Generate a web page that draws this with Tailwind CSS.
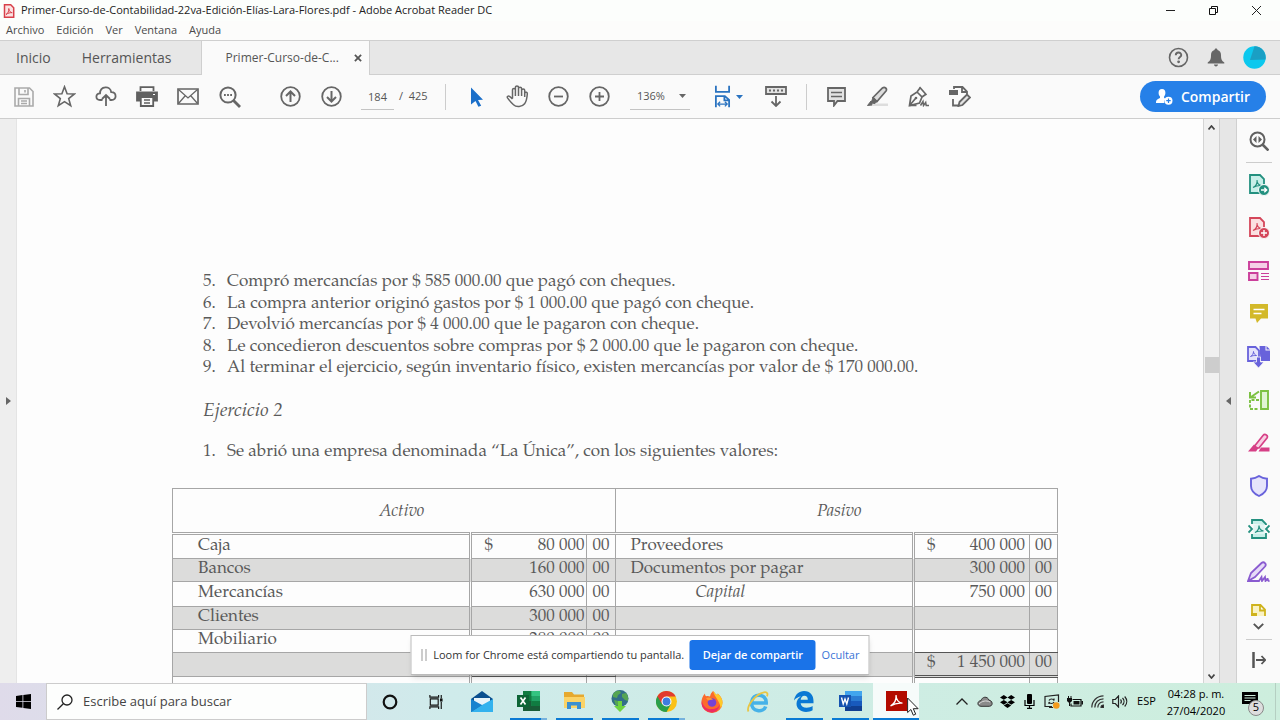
<!DOCTYPE html>
<html lang="es">
<head>
<meta charset="utf-8">
<title>Primer-Curso-de-Contabilidad-22va-Edición-Elías-Lara-Flores.pdf - Adobe Acrobat Reader DC</title>
<script src="https://cdn.jsdelivr.net/npm/@tailwindcss/browser@4"></script>
</head>
<body class="relative flex h-screen flex-col overflow-hidden bg-[#fcfcfc] font-['Open_Sans','Noto_Sans',sans-serif] text-[#444]">

<!-- Title bar -->
<header class="flex h-[21px] shrink-0 items-center bg-[#fcfefc] text-[#222]">
  <svg class="ml-[3px] h-[14px] w-3 shrink-0" viewBox="0 0 12 14" fill="none" stroke="#d8404a"><path d="M1.5.8h6.200l3 3v9.400H1.500z" stroke-width="1.500" fill="#fbe3e3"/><path d="M3 10.500c2-1 3-3.500 2.800-6 0 2.500 1.700 4 3.400 4.200-2.200-.2-4.300.4-6.200 1.800z"/></svg>
  <h1 class="ml-1.5 flex-1 text-[11px] whitespace-nowrap">Primer-Curso-de-Contabilidad-22va-Edición-Elías-Lara-Flores.pdf - Adobe Acrobat Reader DC</h1>
  <button aria-label="Minimizar" class="flex h-5 w-[43px] items-center justify-center"><svg class="size-[11px]" viewBox="0 0 11 11" stroke="#222"><path d="M1 5.500h9"/></svg></button>
  <button aria-label="Restaurar" class="flex h-5 w-[43px] items-center justify-center"><svg class="size-[11px]" viewBox="0 0 11 11" fill="none" stroke="#111"><path d="M1.500 3.500h6v6h-6zM3.500 3V1.500h6v6H8"/></svg></button>
  <button aria-label="Cerrar" class="mr-0.5 flex h-5 w-[43px] items-center justify-center"><svg class="size-[11px]" viewBox="0 0 11 11" stroke="#222"><path d="M1 1l9 9M10 1l-9 9"/></svg></button>
</header>

<!-- Menu bar -->
<nav class="flex h-[19px] shrink-0 items-center gap-3 bg-[#fcfcfb] pl-1.5 text-[11px] text-[#4a4a4a]">
  <button>Archivo</button><button>Edición</button><button>Ver</button><button>Ventana</button><button>Ayuda</button>
</nav>

<!-- Tabs -->
<div class="flex h-[35px] shrink-0 border-y border-[#cfcfcf] bg-[#e7e7e7] text-[14px] text-[#555]">
  <button class="pl-4 text-left">Inicio</button>
  <button class="pl-[31px] text-left">Herramientas</button>
  <div class="-mb-px ml-[29px] flex w-[169px] items-center justify-between border-x border-[#cfcfcf] bg-[#fafafa] pr-[7px] pl-6 text-[12px]">
    <button class="whitespace-nowrap">Primer-Curso-de-C...</button>
    <button aria-label="Cerrar pestaña"><svg class="size-2" viewBox="0 0 9 9" stroke="#555" stroke-width="2"><path d="M1 1l7 7M8 1L1 8"/></svg></button>
  </div>
  <div class="ml-auto flex items-center gap-[18px] pr-[14px]">
    <button aria-label="Ayuda"><svg class="size-[21px]" viewBox="0 0 21 21" fill="none" stroke="#666" stroke-width="1.600"><circle cx="10.500" cy="10.500" r="9"/><path d="M7.800 8.200c0-3.500 5.500-3.500 5.500-.2 0 2-2.700 2-2.700 4.200" stroke-width="1.900"/><circle cx="10.600" cy="14.800" r=".6" fill="#666"/></svg></button>
    <button aria-label="Notificaciones"><svg class="h-[19px] w-[18px]" viewBox="0 0 18 19" fill="#666"><path d="M9 .5c1 0 1.500.7 1.500 1.600 2.300.7 3.500 2.500 3.500 5 0 4.200.8 6 3.300 7.400v1H.7v-1C3.200 13.100 4 11.300 4 7.100c0-2.500 1.200-4.300 3.500-5C7.500 1.200 8 .5 9 .5zM7 16.500h4c0 1-.8 1.900-2 1.900s-2-.9-2-1.900z"/></svg></button>
    <button aria-label="Cuenta"><svg class="size-[23px]" viewBox="0 0 23 23"><circle cx="11.500" cy="11.500" r="11.200" fill="#0cc8ee"/><path d="M11.500.3a11.200 11.200 0 0 1 11 13.200L7 14z" fill="#1a9fc4"/></svg></button>
  </div>
</div>

<!-- Toolbar -->
<div class="flex h-11 shrink-0 items-center border-b border-[#cdcdcd] bg-[#fafafa] pl-[3px] text-[12px] text-[#555]">
  <button aria-label="Guardar" class="flex w-[41px] justify-center"><svg class="size-5" viewBox="0 0 20 20" fill="none" stroke="#aaa" stroke-width="1.600"><path d="M1 1h14.500L19 4.500V19H1zM5 1v6.500h9V1M4.500 19v-7.500h11V19M7 14h6M7 16.500h6M11 3v2.500"/></svg></button>
  <button aria-label="Favoritos" class="flex w-[41px] justify-center"><svg class="size-[23px]" viewBox="0 0 23 23" fill="none" stroke="#666" stroke-width="1.600"><path d="M11.500 1.800l2.600 6.900 7.400.3-5.800 4.600 2 7.100-6.200-4.100-6.200 4.100 2-7.100L1.500 9l7.400-.3z"/></svg></button>
  <button aria-label="Subir a la nube" class="flex w-[41px] justify-center"><svg class="h-[21px] w-[22px]" viewBox="0 0 22 21" fill="none" stroke="#666" stroke-width="1.800"><path d="M7.500 14H5C.2 14 .2 7.600 5 7.400 5.200-.2 15.500-.6 16.200 6.200c5.800.2 5.800 7.800.3 7.800h-2M11 20v-10.500M7 13l4-4 4 4"/></svg></button>
  <button aria-label="Imprimir" class="flex w-[41px] justify-center"><svg class="h-[21px] w-[22px]" viewBox="0 0 22 21" fill="none" stroke="#606060" stroke-width="1.800"><path d="M4.500 5V1.200h13V5"/><path d="M1 6.500h20v8H1z" fill="#606060"/><path d="M4.800 11h12.400v9H4.800z" fill="#fafafa"/><path d="M8 14h6M8 17h6" stroke-width="1.300"/><path d="M17 8.500h2" stroke="#fff" stroke-width="1.200"/></svg></button>
  <button aria-label="Correo" class="flex w-[41px] justify-center"><svg class="h-[17px] w-[22px]" viewBox="0 0 22 17" fill="none" stroke="#666" stroke-width="1.700"><path d="M1 1h20v15H1z"/><path d="M1.500 1.500L11 10l9.500-8.500M1.500 15.500L8 8M20.500 15.500L14 8" stroke-width="1.300"/></svg></button>
  <button aria-label="Buscar" class="flex w-[43px] justify-center"><svg class="size-[22px]" viewBox="0 0 22 22" fill="none" stroke="#666" stroke-width="2"><circle cx="9" cy="9" r="7.600"/><path d="M14.500 14.500l6.500 6.500" stroke-width="2.800"/><path d="M5 9h1.800M8.100 9h1.800M11.200 9H13" stroke-width="1.800"/></svg></button>
  <button aria-label="Página anterior" class="ml-[19px] flex w-[41px] justify-center"><svg class="size-[21px]" viewBox="0 0 21 21" fill="none" stroke="#666" stroke-width="1.800"><circle cx="10.500" cy="10.500" r="9.300"/><path d="M10.500 16V5.500M6 10l4.500-4.500L15 10" stroke-width="2"/></svg></button>
  <button aria-label="Página siguiente" class="flex w-[41px] justify-center"><svg class="size-[21px]" viewBox="0 0 21 21" fill="none" stroke="#666" stroke-width="1.800"><circle cx="10.500" cy="10.500" r="9.300"/><path d="M10.500 5v10.500M6 11l4.500 4.500L15 11" stroke-width="2"/></svg></button>
  <input aria-label="Número de página" value="184" class="ml-[9px] h-[26px] w-[33px] border-b border-[#c4c4c4] bg-transparent text-center text-[11px]">
  <span class="ml-[5px] w-[46px] text-[11px] whitespace-nowrap">/ &nbsp;425</span>
  <span class="h-[26px] w-px bg-[#ccc]"></span>
  <button aria-label="Seleccionar" class="ml-[10px] flex w-[41px] justify-center"><svg class="h-5 w-3" viewBox="0 0 12 20" fill="#1b6fc9"><path d="M0 .5l12 12.200-5 .3 3.200 5.800-2.800 1L4.500 14 0 17.500z"/></svg></button>
  <button aria-label="Mano" class="flex w-[41px] justify-center"><svg class="size-[23px]" viewBox="0 0 23 23" fill="none" stroke="#666" stroke-width="1.500" stroke-linejoin="round"><path d="M6.500 13.500V4.800c0-1.900 2.900-1.900 2.900 0V2.500c0-1.900 3.100-1.900 3.100 0v1c0-1.800 3.100-1.800 3.100 0v1.700c0-1.700 3.100-1.700 3.100 0V8c1-1.400 2.800-.8 2.600 1-.3 4-.6 7-2.700 9.800-2.500 3.200-8.300 3.700-11.100 1C4.800 17.500 3 15 1.500 12.900c-.8-1.500.8-2.300 2-1.500 1.100.7 2 1.600 3 2.600M9.400 4.500V11M12.500 3.500V11M15.600 4.500V11M18.700 6.500V12"/></svg></button>
  <button aria-label="Reducir" class="flex w-[41px] justify-center"><svg class="size-[21px]" viewBox="0 0 21 21" fill="none" stroke="#666" stroke-width="1.800"><circle cx="10.500" cy="10.500" r="9.300"/><path d="M6 10.500h9"/></svg></button>
  <button aria-label="Ampliar" class="flex w-[41px] justify-center"><svg class="size-[21px]" viewBox="0 0 21 21" fill="none" stroke="#666" stroke-width="1.800"><circle cx="10.500" cy="10.500" r="9.300"/><path d="M6 10.500h9M10.500 6v9"/></svg></button>
  <div class="relative ml-[10px] flex h-[26px] w-[60px] items-center border-b border-[#c4c4c4]">
    <select aria-label="Zoom" class="w-full appearance-none bg-transparent pl-[7px] text-[11px]"><option>136%</option></select>
    <svg class="pointer-events-none absolute right-1 h-1 w-[7px]" viewBox="0 0 7 4" fill="#666"><path d="M0 0h7L3.500 4z"/></svg>
  </div>
  <button aria-label="Ajustar ancho" class="ml-6 flex items-center gap-[5px]"><svg class="h-[23px] w-[17px]" viewBox="0 0 18 23" fill="none" stroke="#2a73c0" stroke-width="1.900"><path d="M2 0v6.500h14V0M2 23V11h9.500l4.500 4v8M11 11v4.500h5"/><path d="M4 19.500h10M6.500 17L4 19.500 6.500 22M11.500 17l2.500 2.500-2.500 2.500" stroke-width="1.300"/></svg><svg class="h-1 w-[7px]" viewBox="0 0 7 4" fill="#2a73c0"><path d="M0 0h7L3.500 4z"/></svg></button>
  <button aria-label="Desplazamiento" class="ml-3 flex w-[41px] justify-center"><svg class="h-[21px] w-[22px]" viewBox="0 0 22 21" fill="none" stroke="#666" stroke-width="1.800"><path d="M1 1h20v7H1z" fill="#e3e3e3"/><path d="M4 4.500h14" stroke-dasharray="2 2"/><path d="M11 10v10M6.500 15.500L11 20l4.500-4.500"/></svg></button>
  <span class="ml-[10px] h-[26px] w-px bg-[#ccc]"></span>
  <button aria-label="Comentario" class="ml-[9px] flex w-[41px] justify-center"><svg class="h-5 w-[19px]" viewBox="0 0 19 20" fill="#e3e3e3" stroke="#666" stroke-width="1.800"><path d="M1 1h17v13h-7.500L7 18.500V14H1z"/><path d="M4 5.500h11M4 9.500h11" stroke-width="1.300"/></svg></button>
  <button aria-label="Resaltar" class="flex w-[41px] justify-center"><svg class="size-[21px]" viewBox="0 0 21 21" fill="#ddd" stroke="#666" stroke-width="1.700"><path d="M8 17.500h13V20H3z" fill="#ddd" stroke="none"/><path d="M6 11.500L15.500 2c2.200-1.800 5 .8 3.500 3l-9 10.500z"/><path d="M6 11.500l4 4-2 2-4-.5zM4 15l-3.500 4.500L5 19z" fill="#666" stroke-width="1"/></svg></button>
  <button aria-label="Firmar" class="flex w-[41px] justify-center"><svg class="size-[21px]" viewBox="0 0 21 21" fill="none" stroke="#666" stroke-width="1.700"><path d="M1.500 19.500L3 10l6-4 5 5-2.500 6zM9 6l3-4M14 11l3.500-2.500M11.500 1l7 8M1.500 19.500l6-7"/><circle cx="8" cy="12" r="1.300" fill="#666" stroke="none"/><path d="M1.500 19.500h7M12.500 19.500l2.500-4 .5 4 2.200-3 .5 3H21" stroke-width="1.500"/></svg></button>
  <button aria-label="Editar" class="flex w-[41px] justify-center"><svg class="h-[21px] w-[22px]" viewBox="0 0 22 21" fill="none" stroke="#666" stroke-width="1.800"><path d="M5 3V1h8.500L18 5.500V8M13 1v5h5M4 13v6.500h5"/><path d="M0 4h9v5H0z" fill="#666" stroke="none"/><path d="M10.500 16l7.500-7.500 3 3-7.500 7.500-4 1z" fill="#e3e3e3"/></svg></button>
  <button class="mr-[14px] ml-auto flex h-[31px] w-[126px] items-center justify-center gap-2 rounded-full bg-[#2680e8] text-[14px] font-semibold text-white">
    <svg class="h-4 w-[17px]" viewBox="0 0 17 16" fill="#fff"><path d="M6 0c2.300 0 3.400 1.600 3.400 3.800 0 1.700-.6 2.900-1.300 3.700v1.400l1.700.8A4.500 4.500 0 0 0 8.300 14H0c0-3 .8-3.600 4-5V7.500C3.200 6.700 2.600 5.500 2.600 3.800 2.600 1.600 3.700 0 6 0z"/><circle cx="12.500" cy="11.700" r="4"/><path d="M12.500 9.500v4.400M10.300 11.700h4.400" stroke="#2680e8" stroke-width="1.200"/></svg>
    Compartir
  </button>
</div>

<!-- Workspace -->
<main class="flex min-h-0 flex-1">
  <button aria-label="Abrir panel de navegación" class="flex w-[17px] shrink-0 items-center justify-center border-r border-[#e4e4e4] bg-[#eeeeee]"><svg class="h-2 w-[5px]" viewBox="0 0 5 8" fill="#666"><path d="M0 0l5 4-5 4z"/></svg></button>

  <!-- Page -->
  <article class="min-w-0 flex-1 overflow-hidden bg-[#fdfdfd] pt-[153px] pr-[145px] pl-[155px] font-['TeX_Gyre_Pagella','Palatino_Linotype','Liberation_Serif',serif] text-[17px] text-[#5a5a5a]">
    <ol start="5" class="ml-[31px] leading-[22px] whitespace-nowrap">
      <li class="flex h-[22px]"><span class="w-6">5.</span>Compró mercancías por $ 585 000.00 que pagó con cheques.</li>
      <li class="flex h-[21px]"><span class="w-6">6.</span>La compra anterior originó gastos por $ 1 000.00 que pagó con cheque.</li>
      <li class="flex h-[22px]"><span class="w-6">7.</span>Devolvió mercancías por $ 4 000.00 que le pagaron con cheque.</li>
      <li class="flex h-[21px]"><span class="w-6">8.</span>Le concedieron descuentos sobre compras por $ 2 000.00 que le pagaron con cheque.</li>
      <li class="flex h-[22px]"><span class="w-6">9.</span>Al terminar el ejercicio, según inventario físico, existen mercancías por valor de $ 170 000.00.</li>
    </ol>
    <h2 class="mt-5 ml-[31px] text-[19px] leading-[24px] italic">Ejercicio 2</h2>
    <p class="mt-[18px] ml-[31px] flex leading-[22px] whitespace-nowrap"><span class="w-6">1.</span>Se abrió una empresa denominada “La Única”, con los siguientes valores:</p>

    <table class="mt-6 w-full table-fixed border-collapse border border-[#a6a6a6] leading-[22px]">
      <colgroup><col><col class="w-8"><col class="w-[84px]"><col class="w-7"><col><col class="w-8"><col class="w-[84px]"><col class="w-7"></colgroup>
      <thead>
        <tr class="h-[45px] border-b-3 border-double border-[#a6a6a6]">
          <th colspan="4" class="border-r border-[#a6a6a6] pt-1 pl-4 font-normal italic">Activo</th>
          <th colspan="4" class="pt-1 pl-1.5 font-normal italic">Pasivo</th>
        </tr>
      </thead>
      <tbody>
        <tr class="h-[25px] border-b border-[#a6a6a6]">
          <td class="border-r-3 border-double border-[#a6a6a6] pl-[25px]">Caja</td><td class="pl-3">$</td><td class="border-r border-[#a6a6a6] pr-0.5 text-right">80 000</td><td class="border-r border-[#a6a6a6] text-center">00</td>
          <td class="border-r-3 border-double border-[#a6a6a6] pl-[15px]">Proveedores</td><td class="pl-3">$</td><td class="border-r border-[#a6a6a6] pr-1 text-right">400 000</td><td class="text-center">00</td>
        </tr>
        <tr class="h-[23px] border-b border-[#a6a6a6] bg-[#dcdcdb]">
          <td class="border-r-3 border-double border-[#a6a6a6] pl-[25px]">Bancos</td><td></td><td class="border-r border-[#a6a6a6] pr-0.5 text-right">160 000</td><td class="border-r border-[#a6a6a6] text-center">00</td>
          <td class="border-r-3 border-double border-[#a6a6a6] pl-[15px]">Documentos por pagar</td><td></td><td class="border-r border-[#a6a6a6] pr-1 text-right">300 000</td><td class="text-center">00</td>
        </tr>
        <tr class="h-[25px] border-b border-[#a6a6a6]">
          <td class="border-r-3 border-double border-[#a6a6a6] pl-[25px]">Mercancías</td><td></td><td class="border-r border-[#a6a6a6] pr-0.5 text-right">630 000</td><td class="border-r border-[#a6a6a6] text-center">00</td>
          <td class="border-r-3 border-double border-[#a6a6a6] pl-20 italic">Capital</td><td></td><td class="border-r border-[#a6a6a6] pr-1 text-right">750 000</td><td class="text-center">00</td>
        </tr>
        <tr class="h-[23px] border-b border-[#a6a6a6] bg-[#dcdcdb]">
          <td class="border-r-3 border-double border-[#a6a6a6] pl-[25px]">Clientes</td><td></td><td class="border-r border-[#a6a6a6] pr-0.5 text-right">300 000</td><td class="border-r border-[#a6a6a6] text-center">00</td>
          <td class="border-r-3 border-double border-[#a6a6a6]"></td><td></td><td class="border-r border-[#a6a6a6]"></td><td></td>
        </tr>
        <tr class="h-[23px] border-b border-[#a6a6a6]">
          <td class="border-r-3 border-double border-[#a6a6a6] pl-[25px]">Mobiliario</td><td></td><td class="border-r border-[#a6a6a6] pr-0.5 text-right">280 000</td><td class="border-r border-[#a6a6a6] text-center">00</td>
          <td class="border-r-3 border-double border-[#a6a6a6]"></td><td class="border-b border-[#555]"></td><td class="border-r border-b border-r-[#a6a6a6] border-b-[#555]"></td><td class="border-b border-[#555]"></td>
        </tr>
        <tr class="h-[23px] border-b border-[#a6a6a6] bg-[#dcdcdb]">
          <td class="border-r-3 border-double border-[#a6a6a6]"></td><td class="border-b border-[#555]"></td><td class="border-r border-b border-r-[#a6a6a6] border-b-[#555]"></td><td class="border-r border-b border-r-[#a6a6a6] border-b-[#555]"></td>
          <td class="border-r-3 border-double border-[#a6a6a6]"></td><td class="border-b-3 border-[#555] pl-3 [border-bottom-style:double]">$</td><td class="border-r border-b-3 border-r-[#a6a6a6] border-b-[#555] pr-1 text-right whitespace-nowrap [border-bottom-style:double]">1 450 000</td><td class="border-b-3 border-[#555] text-center [border-bottom-style:double]">00</td>
        </tr>
        <tr class="h-6">
          <td class="border-r-3 border-double border-[#a6a6a6]"></td><td></td><td class="border-r border-[#a6a6a6]"></td><td class="border-r border-[#a6a6a6]"></td>
          <td class="border-r-3 border-double border-[#a6a6a6]"></td><td></td><td class="border-r border-[#a6a6a6]"></td><td></td>
        </tr>
      </tbody>
    </table>
  </article>

  <!-- Scroll bar -->
  <div class="flex w-4 shrink-0 flex-col items-center border-l border-[#d4d4d4] bg-[#f0f0f0] pt-1.5 pb-1">
    <button aria-label="Subir"><svg class="block h-[5px] w-[7px]" viewBox="0 0 7 5" fill="none" stroke="#444" stroke-width="1.700"><path d="M.5 4.500l3-3.500 3 3.500"/></svg></button>
    <div class="min-h-0 flex-[226]"></div>
    <div class="h-4 w-3.5 bg-[#cdcdcd]"></div>
    <div class="min-h-0 flex-[300]"></div>
    <button aria-label="Bajar"><svg class="block h-[5px] w-[7px]" viewBox="0 0 7 5" fill="none" stroke="#444" stroke-width="1.700"><path d="M.5.5L3.500 4l3-3.500"/></svg></button>
  </div>
  <button aria-label="Cerrar panel de herramientas" class="flex w-[18px] shrink-0 items-center justify-center border-x border-[#d0d0d0] bg-[#e6e6e6]"><svg class="h-2 w-[5px]" viewBox="0 0 5 8" fill="#666"><path d="M5 0L0 4l5 4z"/></svg></button>

  <!-- Tools pane -->
  <aside class="flex w-[43px] shrink-0 flex-col items-center overflow-hidden bg-[#fafafa]">
    <button aria-label="Buscar herramientas" class="flex h-[43px] shrink-0 items-center"><svg class="size-5" viewBox="0 0 20 20" fill="none" stroke="#606060" stroke-width="2"><circle cx="8.500" cy="8.500" r="7"/><path d="M13.500 13.500l6 6" stroke-width="2.600"/><path d="M7.500 5v7L4 8.500zM9.500 5v7L13 8.500z" fill="#606060" stroke="none"/></svg></button>
    <span class="h-px w-[26px] shrink-0 bg-[#ccc]"></span>
    <button aria-label="Exportar PDF" class="flex h-[43px] shrink-0 items-center"><svg class="size-[22px]" viewBox="0 0 22 22" fill="none" stroke="#23907f" stroke-width="1.800"><path d="M2 1h10l4 4v14H2z" fill="#c8efe9"/><path d="M5 13.500c3-1.500 4.500-4 4-7.500 0 3 2 5 4 5.500-3 0-5.500.5-8 2z" stroke-width="1.100"/><circle cx="16" cy="16" r="5.500" fill="#23907f" stroke="#fafafa" stroke-width="1"/><path d="M13 16h5.500M16.300 13.700l2.400 2.300-2.400 2.300" stroke="#fff" stroke-width="1.400"/></svg></button>
    <button aria-label="Crear PDF" class="flex h-[43px] shrink-0 items-center"><svg class="size-[22px]" viewBox="0 0 22 22" fill="none" stroke="#d4465a" stroke-width="1.800"><path d="M2 1h10l4 4v14H2z" fill="#fbdfe0"/><path d="M5 13.500c3-1.500 4.500-4 4-7.500 0 3 2 5 4 5.500-3 0-5.500.5-8 2z" stroke-width="1.100"/><circle cx="16" cy="16" r="5.500" fill="#d4465a" stroke="#fafafa" stroke-width="1"/><path d="M13 16h6M16 13v6" stroke="#fff" stroke-width="1.400"/></svg></button>
    <button aria-label="Organizar páginas" class="flex h-[43px] shrink-0 items-center"><svg class="h-5 w-[21px]" viewBox="0 0 21 20" fill="#f5cfe6" stroke="#cb3f9b" stroke-width="1.900"><path d="M1 1h19v7H1zM1 12h8.500v7H1z"/><path d="M13 12.500h8M13 15.500h8M13 18.500h8" stroke-width="1.200"/></svg></button>
    <button aria-label="Comentar" class="flex h-[43px] shrink-0 items-center"><svg class="h-[19px] w-5" viewBox="0 0 20 19" fill="#d3b92a"><path d="M1 0h18v14.500h-7L8 19l-1.500-4.500H1z"/><path d="M4.500 5.500h11M4.500 9.500h8" stroke="#fff" stroke-width="1.500"/></svg></button>
    <button aria-label="Combinar archivos" class="flex h-[43px] shrink-0 items-center"><svg class="h-[23px] w-[23px]" viewBox="0 0 23 23" fill="none" stroke="#6862db" stroke-width="1.800"><path d="M1 2h7.500l3.500 3.500V16H1z" fill="#e4e2fb"/><path d="M3.500 11.500c2-1 3-3 3-5 0 2 1.500 3.500 3 4-2.500 0-4 0-6 1z" stroke-width="1"/><path d="M12.500 1h6v4.500H23V16h-9.500zM19.500 1L23 4.500h-3.500z" fill="#6862db" stroke="none"/><path d="M9.500 12h4v5h3.500l-5.500 6-5.500-6h3.500z" fill="#6862db" stroke="#fafafa" stroke-width=".8"/></svg></button>
    <button aria-label="Recortar páginas" class="flex h-[43px] shrink-0 items-center"><svg class="h-5 w-[21px]" viewBox="0 0 21 20" fill="none" stroke="#7cc142" stroke-width="1.900"><path d="M13 1h7v18h-7z" fill="#e0f4d2"/><path d="M11 10H2v9h9" stroke-dasharray="3 1.500"/><path d="M11 1.500L3 7M2 2v5.500h6" stroke-width="2"/></svg></button>
    <button aria-label="Censurar" class="flex h-[43px] shrink-0 items-center"><svg class="h-[19px] w-[22px]" viewBox="0 0 22 19" fill="#f7cfe2" stroke="#d63f86" stroke-width="1.700"><path d="M5 15L15 2.500C17 .2 20.500 2.500 19 5L11 15z"/><path d="M0 18.500l6-7 4.500 3.500L8 18.500zM10.500 18.500l2.500-4h8.500v4z" fill="#d63f86" stroke="none"/></svg></button>
    <button aria-label="Proteger" class="flex h-[43px] shrink-0 items-center"><svg class="h-[22px] w-[18px]" viewBox="0 0 18 22" fill="#e6e4fb" stroke="#6862db" stroke-width="1.900"><path d="M9 1c2.500 1.700 5 2.500 8 2.700V11c0 5-3.500 8-8 10-4.500-2-8-5-8-10V3.700C4 3.500 6.500 2.700 9 1z"/></svg></button>
    <button aria-label="Optimizar PDF" class="flex h-[43px] shrink-0 items-center"><svg class="h-5 w-[22px]" viewBox="0 0 22 20" fill="none" stroke="#23907f" stroke-width="1.800"><path d="M4 5V1h10l4 4v1M4 15v4h14v-5" fill="#c8efe9"/><path d="M5.500 6h11v9h-11z" fill="#dff5f2" stroke="none"/><path d="M7 13.500c2.500-1 4-3.500 4-7 0 3 2 5 4.500 5.500-3 0-6 0-8.500 1.500z" stroke-width="1.200"/><path d="M.5 6.500L4 10l-3.500 3.500M21.500 6.500L18 10l3.500 3.500"/></svg></button>
    <button aria-label="Rellenar y firmar" class="flex h-[43px] shrink-0 items-center"><svg class="h-[21px] w-[23px]" viewBox="0 0 23 21" fill="none" stroke="#8a5bd0" stroke-width="1.800"><path d="M1 20l3-8L14.500 2c2.500-2 5.500 1 3.500 3.500L8 16z" fill="#e7dbf8"/><path d="M1 20h11l2.500-4 .5 4 3-4 .5 4c1.500-1 2-2 2-3 0 2 .5 3 2 3"/></svg></button>
    <div class="flex min-h-0 flex-1 flex-col items-center overflow-hidden pt-[11px]">
      <button aria-label="Más herramientas" class="h-3 shrink-0 overflow-hidden"><svg class="h-[18px] w-4" viewBox="0 0 16 18" fill="#faf3c4" stroke="#cfb31d" stroke-width="1.800"><path d="M1 17V1h8.500L14 5.500V17M9 1v5.500h5"/><path d="M0 9h6v9H0z" fill="#cfb31d" stroke="none"/></svg></button>
      <button aria-label="Desplazar herramientas" class="mt-1.5 h-[9px] shrink-0"><svg class="block h-[7px] w-[11px]" viewBox="0 0 11 7" fill="none" stroke="#555" stroke-width="1.900"><path d="M.8.800l4.700 4.700L10.200.8"/></svg></button>
      <span class="mt-2 h-px w-[26px] shrink-0 bg-[#ccc]"></span>
      <button aria-label="Contraer panel" class="flex h-10 shrink-0 items-center"><svg class="h-4 w-[14px]" viewBox="0 0 14 16" fill="none" stroke="#555"><path d="M1.500 0v16" stroke-width="2.500"/><path d="M4 8h9M9.500 4L13.200 8l-3.700 4" stroke-width="1.800"/></svg></button>
    </div>
  </aside>
</main>

<!-- Taskbar -->
<footer class="flex h-[37px] shrink-0 items-stretch bg-linear-to-r from-[#dfdbea] via-[#cfebeb] via-35% to-[#cdeedd] text-black">
  <button aria-label="Inicio" class="flex w-[46px] shrink-0 items-center justify-center"><svg class="size-[15px]" viewBox="0 0 15 15"><path d="M0 2l6.500-1v6H0zM7.300.9L15 0v7H7.300zM0 7.800h6.500v6L0 13zM7.300 7.800H15V15l-7.700-1z"/></svg></button>
  <label class="flex w-[321px] shrink-0 items-center border border-[#ccc] bg-[#fdfefd]">
    <svg class="ml-[10px] size-4" viewBox="0 0 16 16" fill="none" stroke="#222" stroke-width="1.300"><circle cx="10" cy="6" r="5"/><path d="M6.300 9.700L.5 15.500"/></svg>
    <input aria-label="Buscar" placeholder="Escribe aquí para buscar" class="ml-[10px] w-64 bg-transparent text-[13px] placeholder:text-[#444]">
  </label>
  <button aria-label="Cortana" class="flex w-[46px] shrink-0 items-center justify-center"><svg class="size-4" viewBox="0 0 16 16" fill="none" stroke="#111" stroke-width="2.200"><circle cx="8" cy="8" r="6.300"/></svg></button>
  <button aria-label="Vista de tareas" class="flex w-[46px] shrink-0 items-center justify-center"><svg class="h-[14px] w-4" viewBox="0 0 16 16" fill="none" stroke="#111" stroke-width="1.300"><path d="M1 0v2.500h10V0M1 16v-2.500h10V16M1.500 4.500h9v7h-9zM14 0v4M14 8v8"/><path d="M12.500 4h3v3.500h-3z" fill="#111" stroke="none"/></svg></button>
  <button aria-label="Correo" class="flex w-[46px] shrink-0 items-center justify-center"><svg class="h-[22px] w-6" viewBox="0 0 24 22"><path d="M1 8L12 0l11 8v13H1z" fill="#0b4f8f"/><path d="M4 7h16v7H4z" fill="#e8f4fa"/><path d="M1 8l11 6L1 21z" fill="#1683cf"/><path d="M23 8l-11 6-11 7h22z" fill="#33b2ee"/></svg></button>
  <button aria-label="Excel" class="flex w-[46px] shrink-0 flex-col items-center justify-between pt-2"><svg class="h-5 w-[23px]" viewBox="0 0 23 20"><path d="M6 0h17v20H6z" fill="#21a366"/><path d="M6 0h8.500v10H6z" fill="#107c41"/><path d="M14.500 0H23v5h-8.500z" fill="#33c481"/><path d="M6 10h8.500v10H6zM14.500 15H23v5h-8.500z" fill="#185c37"/><path d="M14.500 10H23v5h-8.500z" fill="#107c41"/><path d="M0 4h12v12H0z" fill="#0d6436"/><path d="M3.500 6.500l5 7M8.500 6.500l-5 7" stroke="#fff" stroke-width="1.700"/></svg><span class="h-0.5 w-[37px] border-r-6 border-[#76b2dd] bg-[#0a7ad4]"></span></button>
  <button aria-label="Explorador de archivos" class="flex w-[46px] shrink-0 flex-col items-center justify-between pt-2"><svg class="h-5 w-[21px]" viewBox="0 0 21 20"><path d="M0 1h8l2 2.500h10V17H0z" fill="#e6a92f"/><path d="M0 6h21v11H0z" fill="#fbd367"/><path d="M3 18v-7h14v7h-4v-3.500H7V18z" fill="#3b8fd1"/></svg><span class="h-0.5 w-[37px] bg-[#0a7ad4]"></span></button>
  <button aria-label="Mapas" class="flex w-[46px] shrink-0 flex-col items-center justify-between pt-[7px]"><svg class="h-[22px] w-[18px]" viewBox="0 0 18 22"><circle cx="9" cy="8.500" r="8.500" fill="#326e89"/><path d="M2 4c2-3 5-4 7-3l1 2-3 2-1 3-4-1zM11 4l4-1c2 2 2.500 5 2 8l-3-1-3-3zM3 10l4 1 1 4-3 1z" fill="#55a553"/><path d="M7 11h4v5h4l-6 6-6-6h4z" fill="#6ed33e"/></svg><span class="h-0.5 w-[37px] bg-[#0a7ad4]"></span></button>
  <button aria-label="Chrome" class="flex w-[46px] shrink-0 flex-col items-center justify-between pt-2"><svg class="size-[21px]" viewBox="0 0 21 21"><circle cx="10.500" cy="10.500" r="10.500" fill="#fbc116"/><path d="M1.400 5.250A10.500 10.500 0 0 0 10.500 21L15 13z" fill="#2a9f4b"/><path d="M10.500 5.500h9.200l-.1-.2A10.500 10.500 0 0 0 1.400 5.200l4.700 8z" fill="#e23b2e"/><circle cx="10.500" cy="10.500" r="5" fill="#fff"/><circle cx="10.500" cy="10.500" r="3.900" fill="#3f7de0"/></svg><span class="h-0.5 w-[37px] border-r-6 border-[#76b2dd] bg-[#0a7ad4]"></span></button>
  <button aria-label="Firefox" class="flex w-[46px] shrink-0 items-center justify-center"><svg class="size-[22px]" viewBox="0 0 22 22"><path d="M12 0c2 2 2.500 3 4 4 1-.2.500-1 .7-1.500 3 2.500 4.800 5.500 4.800 9a10.500 10.500 0 0 1-21 0C.5 8 1.500 5 4 2.500c0 1.500.3 2 1.200 2.700 1.300-.5 2.500-.3 3.800.2C9.500 3 10.500 1.500 12 0z" fill="#fb6a2c"/><path d="M12 0c2 2 2.500 3 4 4 1-.2.500-1 .7-1.500 3 2.500 4.800 5.500 4.800 9 0 2-.5 4-1.800 5.700C19 10 14 7 12 0z" fill="#ffc928"/><path d="M1 9c0 6 5 10 10 9 4 0 7-2 8-5-1 6-4.500 8.500-8.500 8.500S1 18 .5 12.500z" fill="#ec2c62"/><circle cx="11" cy="11.500" r="4.300" fill="#7542d5"/><path d="M5 7c3-1.500 6 0 7 2-2-.5-3 .5-5 .5z" fill="#ff9a30"/></svg></button>
  <button aria-label="Internet Explorer" class="flex w-[46px] shrink-0 items-center justify-center"><svg class="size-[22px]" viewBox="0 0 22 22" fill="none"><path d="M5.500 12h13.700c.5-10-14-10.500-14.700-.5C4 21 16.500 22 18.700 15.500" stroke="#46b2e8" stroke-width="3.600"/><path d="M1.500 20.500C-1 16 8 3 17 1.300c4-.6 3.800 2.200 3 4" stroke="#e8c645" stroke-width="1.800"/></svg></button>
  <button aria-label="Edge" class="flex w-[46px] shrink-0 flex-col items-center justify-between pt-2"><svg class="h-[21px] w-5" viewBox="0 0 20 21"><path d="M0 9.500C1 3.500 5 0 10 0c6.500 0 9.500 4.500 9.500 10v2.200H6.600c.4 3 3 4.500 6 4.500 2.300 0 4.300-.7 6-1.700v4.300C16.700 20.500 14.500 21 12 21 6.500 21 2.500 17.500 2.500 12.800c0-3.300 1.700-6 4.500-7.300C4.500 5.700 2 7 0 9.500zM6.700 8.700h7.100c0-2.500-1.200-4-3.500-4-2 0-3.400 1.700-3.600 4z" fill="#0a78d4"/></svg><span class="h-0.5 w-[37px] bg-[#0a7ad4]"></span></button>
  <button aria-label="Word" class="flex w-[46px] shrink-0 flex-col items-center justify-between pt-2"><svg class="h-5 w-[23px]" viewBox="0 0 23 20"><path d="M6 0h17v5H6z" fill="#41a5ee"/><path d="M6 5h17v5H6z" fill="#2b7cd3"/><path d="M6 10h17v5H6z" fill="#185abd"/><path d="M6 15h17v5H6z" fill="#103f91"/><path d="M0 4h12v12H0z" fill="#1553b0"/><path d="M2.500 6.500l1.700 6.500L6 8l1.800 5 1.700-6.500" fill="none" stroke="#fff" stroke-width="1.400"/></svg><span class="h-0.5 w-[37px] bg-[#0a7ad4]"></span></button>
  <button aria-label="Adobe Acrobat" class="flex w-[46px] shrink-0 flex-col items-center justify-between bg-[#f6fbfa] pt-2"><svg class="h-5 w-[21px]" viewBox="0 0 21 20"><path d="M0 0h21v20H0z" fill="#b30b00"/><path d="M4.500 15c3.500-2 6-6 5.500-11 0 5 3 8 6.500 8.200-4-.5-8 .3-12 2.800z" fill="none" stroke="#fff" stroke-width="1.300"/></svg><span class="h-0.5 w-full bg-[#0a7ad4]"></span></button>

  <div class="ml-auto flex items-center">
    <button aria-label="Mostrar iconos ocultos" class="flex w-[23px] justify-center"><svg class="h-[7px] w-3" viewBox="0 0 12 7" fill="none" stroke="#222" stroke-width="1.300"><path d="M.5 6.500L6 1l5.500 5.500"/></svg></button>
    <button aria-label="OneDrive" class="flex w-[23px] justify-center"><svg class="h-[11px] w-4" viewBox="0 0 16 11" fill="#8a8a8a" stroke="#333"><path d="M4 10.300C-.5 10 .3 4.500 4 4.700 5 .5 10.500-.2 12 4.200c4 .3 4.300 6 .3 6.100z"/><path d="M2 8c3-3 7-4 11-2" stroke="#ddd"/></svg></button>
    <button aria-label="Dropbox" class="flex w-[22px] justify-center"><svg class="h-[13px] w-[15px]" viewBox="0 0 15 13"><path d="M3.800 0l3.700 2.400-3.700 2.400L0 2.400zM11.200 0L15 2.400l-3.800 2.400-3.700-2.400zM3.800 4.900l3.700 2.400-3.700 2.400L0 7.300zM11.200 4.900L15 7.300l-3.800 2.400-3.700-2.400zM7.500 8.200l3.700 2.400L7.500 13l-3.700-2.400z"/></svg></button>
    <button aria-label="Micrófono" class="flex w-[22px] justify-center"><svg class="h-[15px] w-[11px]" viewBox="0 0 11 15"><rect x="3" width="5" height="10" rx="1"/><path d="M1 6v5.500h9V6M5.500 11.500V14M3 14.300h5" fill="none" stroke="#000" stroke-width="1.200"/></svg></button>
    <button aria-label="Actualización" class="flex w-[23px] justify-center"><svg class="h-[15px] w-4" viewBox="0 0 16 15" fill="none" stroke="#222" stroke-width="1.200"><path d="M14.500 8V1L1 2.500v10h7M5 13.500h4"/><path d="M5 6.500c1-2 4-2 5 0V4.500M10 8c-1 2-4 2-5 0v2"/><circle cx="12.300" cy="11.500" r="3.300" fill="#f49b1c" stroke="none"/></svg></button>
    <button aria-label="Batería" class="flex w-[23px] justify-center"><svg class="h-3 w-4" viewBox="0 0 16 12" fill="none" stroke="#111" stroke-width="1.200"><path d="M5.500 3.500H14v6.500H4V7.500"/><path d="M6.500 5h6v3.500h-6zM14.500 5H16v3.500h-1.500zM0 2h5v3L3.500 6.500h-2L0 5zM1 0h1v2H1zM3.500 0h1v2h-1zM2 6h1v4H2z" fill="#111" stroke="none"/></svg></button>
    <button aria-label="Wi-Fi" class="flex w-[22px] justify-center"><svg class="size-[13px]" viewBox="0 0 13 13" fill="none" stroke="#333" stroke-width="1.200"><path d="M.8 12.500C.8 6 6 .8 12.500.8M3.800 12.500c0-5 3.700-8.700 8.700-8.700M6.800 12.500c0-3.300 2.400-5.700 5.700-5.700"/><path d="M10 12.500a2.500 2.500 0 0 1 2.500-2.500v2.500z" fill="#111"/></svg></button>
    <button aria-label="Volumen" class="flex w-[23px] justify-center"><svg class="h-[13px] w-4" viewBox="0 0 16 13" fill="none" stroke="#222" stroke-width="1.200"><path d="M.8 4.500h2.500L6.500 1v11L3.300 8.500H.8zM8.500 4.500c1 1.200 1 2.800 0 4M10.500 3c2 2 2 5 0 7M12.700 1.500c2.700 3 2.700 7 0 10"/></svg></button>
    <button class="w-[31px] text-center text-[11px]">ESP</button>
    <time datetime="2020-04-27T16:28" class="w-[68px] text-center text-[11px] leading-[17px] whitespace-nowrap">04:28 p. m.<br>27/04/2020</time>
    <button aria-label="5 notificaciones" class="relative mr-2 ml-3 flex h-6 w-[25px]"><svg class="mt-0.5 h-[15px] w-4" viewBox="0 0 16 15"><path d="M0 0h16v12h-5v3l-4-3H0z"/><path d="M2.500 3.500h11M2.500 6h11M2.500 8.500h6" stroke="#cdeedd"/></svg><span class="absolute top-2.5 left-[6px] flex size-4 items-center justify-center rounded-full border border-[#888] bg-[#ddd] text-[11px]">5</span></button>
    <span class="mr-1 h-full w-px bg-[#b5cfc2]"></span>
  </div>
</footer>

<!-- Screen sharing notice -->
<div role="status" class="absolute bottom-[45px] left-1/2 flex h-10 w-[459px] -translate-x-1/2 items-center justify-between border border-[#bbb] bg-white px-[9px] text-[11px] whitespace-nowrap shadow-md">
  <svg class="h-3 w-[7px] shrink-0" viewBox="0 0 7 12" stroke="#bbb" stroke-width="1.500"><path d="M1.500 0v12M5.500 0v12"/></svg>
  <span class="text-[#333]">Loom for Chrome está compartiendo tu pantalla.</span>
  <button class="h-[30px] w-[126px] rounded-[3px] bg-[#1a73e8] font-semibold text-white">Dejar de compartir</button>
  <a href="#" class="text-[#3973d6]">Ocultar</a>
</div>

<!-- Mouse pointer -->
<svg class="pointer-events-none absolute bottom-1 left-[907px] h-[19px] w-3" viewBox="0 0 12 19" fill="#fff" stroke="#222"><path d="M.6 1v14.500l3.300-3 2.400 5.700 2.400-1-2.400-5.500h4.800z"/></svg>
</body>
</html>
